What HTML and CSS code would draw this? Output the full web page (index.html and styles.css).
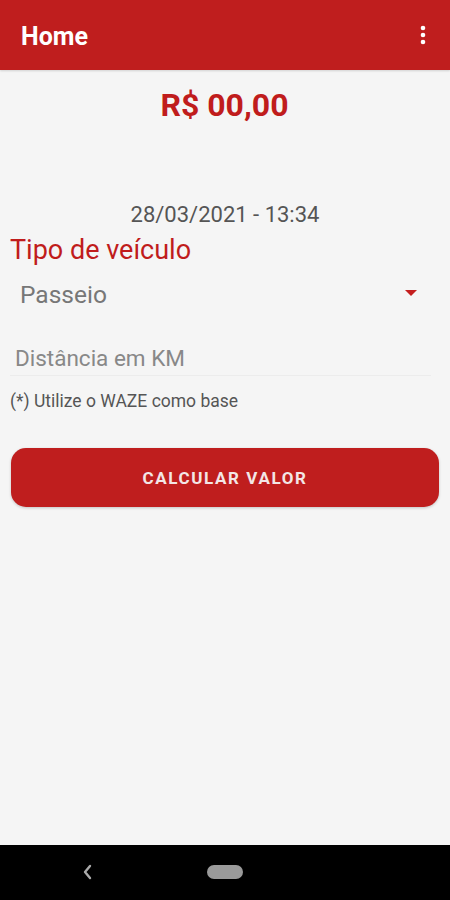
FILE: index.html
```html
<!DOCTYPE html>
<html>
<head>
<meta charset="utf-8">
<link rel="stylesheet" href="styles.css">
</head>
<body>
<div class="screen">
  <header class="appbar">
    <span class="title">Home</span>
    <svg class="menu" width="6" height="20" viewBox="0 0 6 20"><circle cx="3" cy="3" r="2.3" fill="#fff"/><circle cx="3" cy="10" r="2.3" fill="#fff"/><circle cx="3" cy="17" r="2.3" fill="#fff"/></svg>
  </header>
  <main class="content">
    <div class="value">R$ 00,00</div>
    <div class="date">28/03/2021 - 13:34</div>
    <div class="label">Tipo de veículo</div>
    <div class="select">
      <span>Passeio</span>
      <svg width="12" height="6" viewBox="0 0 12 6"><path d="M0 0 L12 0 L6 6 Z" fill="#C41E1E"/></svg>
    </div>
    <div class="input">Distância em KM</div>
    <div class="hint">(*) Utilize o WAZE como base</div>
    <button class="btn">CALCULAR VALOR</button>
  </main>
  <footer class="navbar">
    <svg class="back" width="10" height="16" viewBox="0 0 10 16"><path d="M8 2 L3 8 L8 14" stroke="#aaa" stroke-width="2.4" fill="none" stroke-linecap="round" stroke-linejoin="round"/></svg>
    <span class="pill"></span>
  </footer>
</div>
</body>
</html>
```
FILE: styles.css
```css
* { box-sizing: border-box; }
html, body { margin: 0; padding: 0; }
body { font-family: Roboto, "Liberation Sans", sans-serif; background: #f5f5f5; }
.screen { width: 450px; height: 900px; display: flex; flex-direction: column; }
.appbar { height: 70px; background: #bf1e1e; display: flex; align-items: center; justify-content: space-between; padding: 0 24px 0 21px; box-shadow: 0 1px 2px rgba(0,0,0,0.15); }
.title { color: #fff; font-size: 25px; font-weight: 700; margin-top: 2px; }
.menu { margin-top: -1px; }
.content { flex: 1; display: flex; flex-direction: column; padding: 0 11px 0 10px; }
.value { text-align: center; color: #c01c1c; font-size: 32px; font-weight: 700; margin-top: 15px; line-height: 40px; }
.date { text-align: center; color: #555; font-size: 22px; margin-top: 76px; line-height: 28px; padding-left: 1px; }
.label { color: #c01c1c; font-size: 27px; line-height: 34px; margin-top: 4px; }
.select { display: flex; align-items: center; justify-content: space-between; padding: 0 22px 0 10px; margin-top: 12px; height: 30px; color: #777; font-size: 24.5px; }
.select svg { margin-top: -3px; }
.input { margin-top: 34px; padding: 0 0 2px 5px; color: #888; font-size: 22.5px; line-height: 30px; border-bottom: 1px solid #ececec; margin-right: 8px; }
.hint { margin-top: 14px; color: #555; font-size: 17.5px; line-height: 22px; }
.btn { margin-top: 36px; height: 59px; width: 428px; margin-left: 1px; border: none; border-radius: 15px; background: #bf1e1e; color: #f3e6e6; font-family: Roboto, "Liberation Sans", sans-serif; font-size: 17px; font-weight: 700; letter-spacing: 1.6px; box-shadow: 0 1px 3px rgba(0,0,0,0.2); }
.navbar { height: 55px; background: #000; display: flex; align-items: center; position: relative; }
.back { position: absolute; left: 82px; top: 19px; }
.pill { position: absolute; left: 207px; top: 20px; width: 36px; height: 14px; border-radius: 7px; background: #9a9a9a; }
```
